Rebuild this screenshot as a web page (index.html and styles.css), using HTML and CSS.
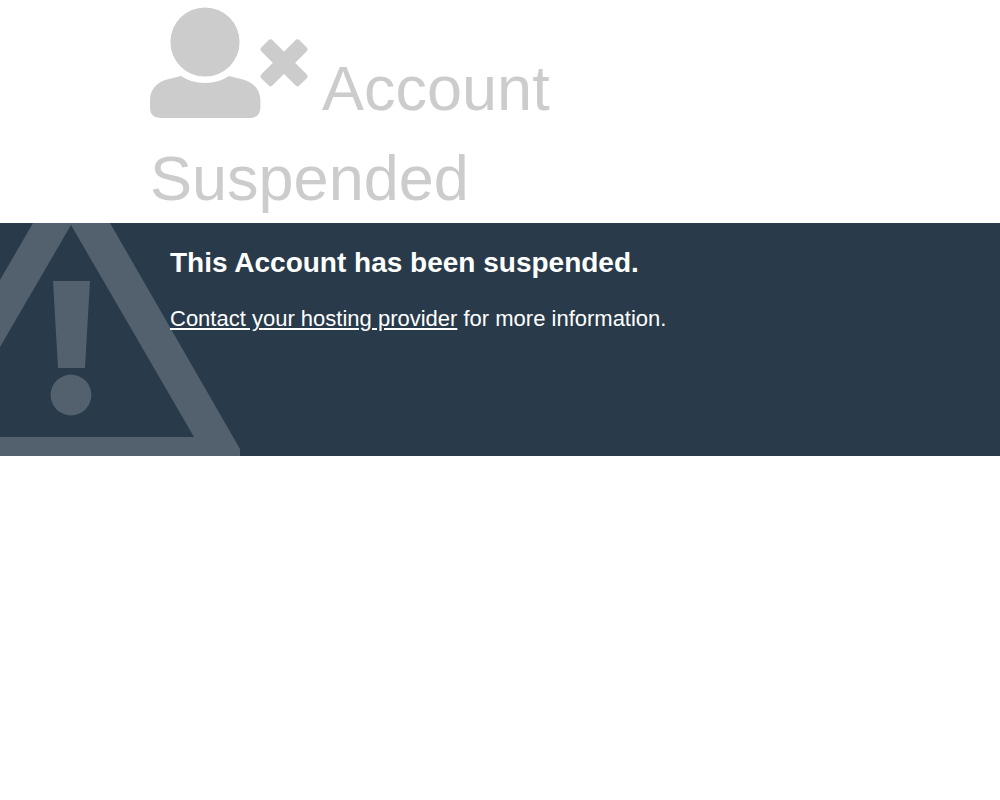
FILE: index.html
```html
<!DOCTYPE html>
<html lang="en">
<head>
  <meta charset="UTF-8" />
  <meta name="viewport" content="width=device-width, initial-scale=1.0"/>
  <title>Account Suspended</title>
  <link rel="stylesheet" href="styles.css">
</head>
<body>

  <header class="container status">
    <h1 class="status-reason">
      <svg class="icon-user" viewBox="0 0 158 111" aria-hidden="true">
        <circle cx="55" cy="35" r="34.6"/>
        <path d="M31 69 L17 72.5 C6 75.5 0 83 0 93 V100 Q0 111 11 111 H99 Q110.4 111 110.4 100 V93 C110 83 104 75.5 93 72.5 L79 69 Q69 76 55 76 Q41 76 31 69 Z"/>
        <g transform="translate(134 55.8) rotate(45)">
          <rect x="-27" y="-7.9" width="54" height="15.8" rx="3"/>
          <rect x="-7.9" y="-27" width="15.8" height="54" rx="3"/>
        </g>
      </svg>
      Account Suspended
    </h1>
  </header>

  <section class="additional-info">
    <!-- Warning sign behind the text -->
    <svg class="info-image" viewBox="0 0 240 233" aria-hidden="true">
      <path fill-rule="evenodd" d="M0 57 L33 0 H110 L240 226 V233 H0 Z M71 2 L0 124 V214 H194 Z"/>
      <path d="M53 58 H90 L85 145 H58 Z"/>
      <circle cx="71" cy="172" r="20.4"/>
    </svg>
    <div class="container">
      <div class="info-text">
        <h2 class="info-heading">This Account has been suspended.</h2>
        <p><a href="#">Contact your hosting provider</a> for more information.</p>
      </div>
    </div>
  </section>

</body>
</html>
```

FILE: styles.css
```css
* {
  margin: 0;
  padding: 0;
  box-sizing: border-box;
}

body {
  font-family: Arial, "Liberation Sans", sans-serif;
  font-size: 22px;
  line-height: 31px;
  color: #cccccc;
  background-color: #ffffff;
}

.container {
  width: 70%;
  margin: 0 auto;
}

.status {
  padding-top: 7px;
}

.status-reason {
  font-size: 63px;
  font-weight: normal;
  line-height: 90px;
}

.icon-user {
  width: 158px;
  height: 111px;
  vertical-align: -8px;
  fill: #cccccc;
}

.additional-info {
  position: relative;
  min-height: 233px;
  overflow: hidden;
  color: #ffffff;
  background-color: #293a4a;
}

.info-image {
  position: absolute;
  top: 0;
  left: 0;
  width: 240px;
  height: 233px;
  fill: #53616e;
}

.info-text {
  position: relative;
  padding: 20px;
}

.info-heading {
  font-size: 28px;
  line-height: 40px;
  margin-bottom: 20px;
}

.info-text a {
  color: #ffffff;
  text-decoration: underline;
}

@media (max-width: 480px) {
  .container {
    width: 90%;
  }

  .status-reason {
    font-size: 40px;
    line-height: 60px;
  }
}
```
